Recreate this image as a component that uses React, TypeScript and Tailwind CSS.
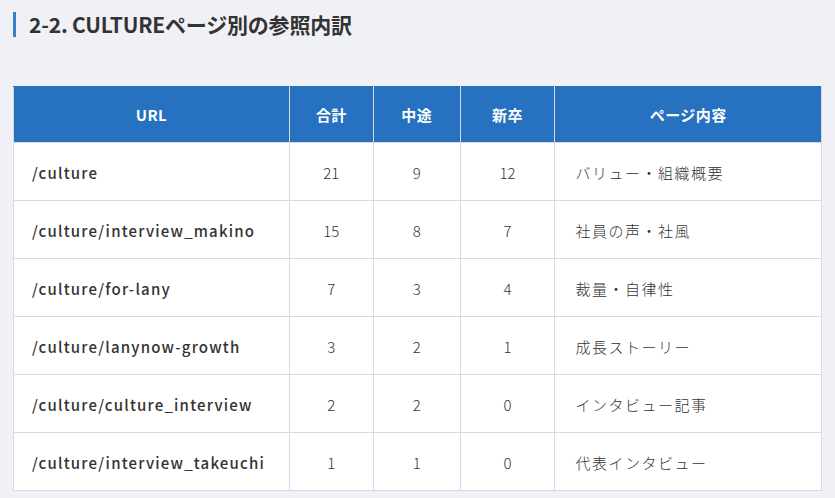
export default function App() {
  const rows = [
    { url: "/culture", total: 21, mid: 9, grad: 12, desc: "バリュー・組織概要" },
    { url: "/culture/interview_makino", total: 15, mid: 8, grad: 7, desc: "社員の声・社風" },
    { url: "/culture/for-lany", total: 7, mid: 3, grad: 4, desc: "裁量・自律性" },
    { url: "/culture/lanynow-growth", total: 3, mid: 2, grad: 1, desc: "成長ストーリー" },
    { url: "/culture/culture_interview", total: 2, mid: 2, grad: 0, desc: "インタビュー記事" },
    { url: "/culture/interview_takeuchi", total: 1, mid: 1, grad: 0, desc: "代表インタビュー" },
  ];
  const font = { fontFamily: '"Noto Sans CJK JP", "Noto Sans", sans-serif' };
  return (
    <div className="w-[835px] h-[498px] bg-[#f0f1f6] overflow-hidden pl-[13px] pt-[12px]" style={font}>
      <div className="flex items-center h-[25px]">
        <div className="w-[3px] h-[25px] bg-[#3a7fc6]" />
        <h2 className="ml-[13px] text-[21px] font-bold text-[#333] leading-none tracking-[-0.01em]">
          2-2. CULTUREページ別の参照内訳
        </h2>
      </div>
      <table className="mt-[49px] w-[809px] border-collapse bg-white text-[15px] text-[#333]">
        <colgroup>
          <col className="w-[276px]" />
          <col className="w-[84px]" />
          <col className="w-[87px]" />
          <col className="w-[95px]" />
          <col className="w-[267px]" />
        </colgroup>
        <thead>
          <tr className="h-[56px] bg-[#2672c0] text-white">
            {["URL", "合計", "中途", "新卒", "ページ内容"].map((h) => (
              <th key={h} className="border border-[#d9d9e0] border-t-[#2672c0] pt-[2px] font-bold text-[15px] tracking-[0.03em]">
                {h}
              </th>
            ))}
          </tr>
        </thead>
        <tbody>
          {rows.map((r) => (
            <tr key={r.url} className="h-[58px]">
              <td className="border border-[#d9d9e0] pl-[18px] pt-[3px] font-medium tracking-[0.08em]">{r.url}</td>
              <td className="border border-[#d9d9e0] pt-[3px] text-center font-light">{r.total}</td>
              <td className="border border-[#d9d9e0] pt-[3px] text-center font-light">{r.mid}</td>
              <td className="border border-[#d9d9e0] pt-[3px] text-center font-light">{r.grad}</td>
              <td className="border border-[#d9d9e0] pl-[20px] pt-[3px] font-light tracking-[0.1em]">{r.desc}</td>
            </tr>
          ))}
        </tbody>
      </table>
    </div>
  );
}
